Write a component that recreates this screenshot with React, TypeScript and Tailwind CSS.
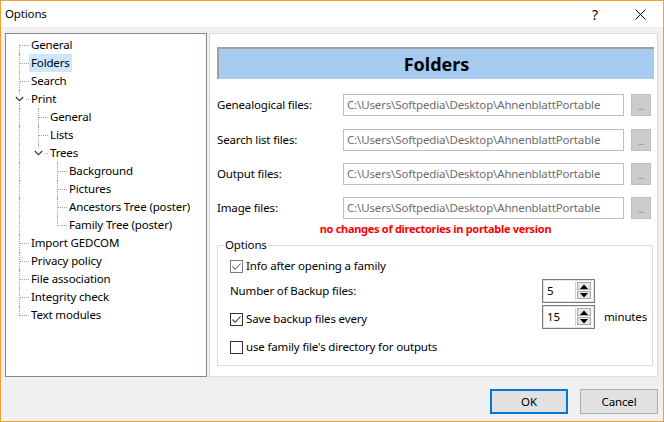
import React from "react";

type Row = {
  label: string;
  depth: number;
  guides: boolean[];
  kind: "first" | "mid" | "last";
  expander?: boolean;
  selected?: boolean;
};

const rows: Row[] = [
  { label: "General", depth: 0, guides: [], kind: "first" },
  { label: "Folders", depth: 0, guides: [], kind: "mid", selected: true },
  { label: "Search", depth: 0, guides: [], kind: "mid" },
  { label: "Print", depth: 0, guides: [], kind: "mid", expander: true },
  { label: "General", depth: 1, guides: [true], kind: "mid" },
  { label: "Lists", depth: 1, guides: [true], kind: "mid" },
  { label: "Trees", depth: 1, guides: [true], kind: "last", expander: true },
  { label: "Background", depth: 2, guides: [true, false], kind: "mid" },
  { label: "Pictures", depth: 2, guides: [true, false], kind: "mid" },
  { label: "Ancestors Tree (poster)", depth: 2, guides: [true, false], kind: "mid" },
  { label: "Family Tree (poster)", depth: 2, guides: [true, false], kind: "last" },
  { label: "Import GEDCOM", depth: 0, guides: [], kind: "mid" },
  { label: "Privacy policy", depth: 0, guides: [], kind: "mid" },
  { label: "File association", depth: 0, guides: [], kind: "mid" },
  { label: "Integrity check", depth: 0, guides: [], kind: "mid" },
  { label: "Text modules", depth: 0, guides: [], kind: "last" },
];

function Guide({ on }: { on: boolean }) {
  return (
    <div className="relative w-[19px] h-full shrink-0">
      {on && <div className="absolute left-[9px] top-0 bottom-0 border-l border-dotted border-[#a0a0a0]" />}
    </div>
  );
}

function Connector({ kind, expander }: { kind: Row["kind"]; expander?: boolean }) {
  return (
    <div className="relative w-[19px] h-full shrink-0">
      {kind === "first" && (
        <div className="absolute left-[9px] top-[9px] bottom-0 border-l border-dotted border-[#a0a0a0]" />
      )}
      {kind === "mid" && (
        <div className="absolute left-[9px] top-0 bottom-0 border-l border-dotted border-[#a0a0a0]" />
      )}
      {kind === "last" && (
        <div className="absolute left-[9px] top-0 h-[10px] border-l border-dotted border-[#a0a0a0]" />
      )}
      {expander ? (
        <>
          <div className="absolute left-[16px] right-0 top-[9px] border-t border-dotted border-[#a0a0a0]" />
          <div className="absolute left-[4px] top-[5px] w-[11px] h-[8px] bg-white flex items-center justify-center">
            <svg width="9" height="6" viewBox="0 0 9 6">
              <path d="M0.8 1 L4.5 4.7 L8.2 1" fill="none" stroke="#3c3c3c" strokeWidth="1.3" />
            </svg>
          </div>
        </>
      ) : (
        <div className="absolute left-[10px] right-0 top-[9px] border-t border-dotted border-[#a0a0a0]" />
      )}
    </div>
  );
}

function Tree() {
  return (
    <div className="w-[202px] h-full bg-white border border-[#828790] pt-[2px] pl-[4px]">
      {rows.map((r, i) => (
        <div key={i} className="flex h-[18px] items-stretch">
          {r.guides.map((g, j) => (
            <Guide key={j} on={g} />
          ))}
          <Connector kind={r.kind} expander={r.expander} />
          <div
            className={
              "px-[2px] leading-[18px] text-[11.5px] text-[#000] whitespace-nowrap " +
              (r.selected ? "bg-[#cce8ff]" : "")
            }
          >
            {r.label}
          </div>
        </div>
      ))}
    </div>
  );
}

function PathRow({ label, className }: { label: string; className: string }) {
  return (
    <div className={"flex h-[22px] items-center " + className}>
      <div className="w-[126px] text-[11.5px] text-black">{label}</div>
      <div className="w-[281px] h-[22px] border border-[#bfbfbf] bg-white flex items-center pl-[3px] text-[11.5px] text-[#6d6d6d] whitespace-nowrap overflow-hidden">
        C:\Users\Softpedia\Desktop\AhnenblattPortable
      </div>
      <div className="ml-[7px] w-[20px] h-[22px] bg-[#cccccc] border border-[#bfbfbf] flex items-end justify-center pb-[4px] text-[9px] leading-[9px] text-[#7a7a7a]">
        ...
      </div>
    </div>
  );
}

function Check({ checked, light }: { checked: boolean; light?: boolean }) {
  return (
    <div
      className={
        "w-[13px] h-[13px] bg-white border shrink-0 flex items-center justify-center " +
        (light ? "border-[#7a7a7a]" : "border-[#333333]")
      }
    >
      {checked && (
        <svg width="11" height="11" viewBox="0 0 11 11">
          <path
            d="M1.5 5.5 L4.2 8.3 L9.5 2.5"
            fill="none"
            stroke={light ? "#707070" : "#333333"}
            strokeWidth="1.1"
          />
        </svg>
      )}
    </div>
  );
}

function Spin({ value }: { value: string }) {
  return (
    <div className="w-[53px] h-[24px] border border-[#7a7a7a] shadow-[inset_0_0_0_1px_#e4e4e4] bg-white flex items-center pl-[4px] pr-[3px] shrink-0">
      <div className="flex-1 text-[11.5px] text-black">{value}</div>
      <div className="h-[18px] border-l border-[#d0d0d0] pl-[1px] flex flex-col gap-[1px]">
        <div className="w-[14px] h-[8px] bg-[#e6e6e6] border border-[#a8a8a8] flex items-center justify-center">
          <svg width="8" height="5" viewBox="0 0 8 5">
            <path d="M0 5 L4 0.5 L8 5 Z" fill="#000" />
          </svg>
        </div>
        <div className="w-[14px] h-[8px] bg-[#e6e6e6] border border-[#a8a8a8] flex items-center justify-center">
          <svg width="8" height="5" viewBox="0 0 8 5">
            <path d="M0 0 L4 4.5 L8 0 Z" fill="#000" />
          </svg>
        </div>
      </div>
    </div>
  );
}

function Panel() {
  return (
    <div className="flex-1 h-full bg-white border border-[#dcdcdc] pl-[7px] pr-[3px] pt-[13px] flex flex-col">
      <div className="h-[32px] bg-[#a6caf0] border-t-2 border-l-2 border-[#a0a0a0] flex items-center justify-center text-[18px] tracking-[0px] font-bold text-black">
        Folders
      </div>
      <PathRow label="Genealogical files:" className="mt-[15px]" />
      <PathRow label="Search list files:" className="mt-[13px]" />
      <PathRow label="Output files:" className="mt-[12px]" />
      <PathRow label="Image files:" className="mt-[12px]" />
      <div className="mt-[3px] h-[14px] leading-[14px] text-center text-[11px] tracking-[-0.3px] font-bold text-[#ff0000]">
        no changes of directories in portable version
      </div>
      <fieldset className="mt-[1px] mr-[1px] border border-[#dcdcdc] pl-[12px] pr-[0px] pb-[8px]">
        <legend className="ml-[-6px] px-[1px] text-[11.5px] leading-[16px] text-black">Options</legend>
        <div className="mt-[3px] h-[20px] flex items-center">
          <Check checked light />
          <span className="ml-[3px] text-[11.5px] text-black">Info after opening a family</span>
        </div>
        <div className="mt-[3px] h-[24px] flex items-center">
          <div className="flex-1 text-[11.5px] text-black">Number of Backup files:</div>
          <Spin value="5" />
          <div className="ml-[9px] w-[48px]" />
        </div>
        <div className="mt-[2px] h-[24px] flex items-start">
          <div className="flex-1 h-[20px] mt-[4px] flex items-center">
            <Check checked />
            <span className="ml-[3px] text-[11.5px] text-black">Save backup files every</span>
          </div>
          <Spin value="15" />
          <div className="ml-[9px] w-[48px] self-center text-[11.5px] text-black">minutes</div>
        </div>
        <div className="mt-[8px] h-[20px] flex items-center">
          <Check checked={false} />
          <span className="ml-[3px] text-[11.5px] text-black">use family file's directory for outputs</span>
        </div>
      </fieldset>
    </div>
  );
}

export default function App() {
  return (
    <div
      className="w-[664px] h-[422px] border border-[#f0a030] bg-[#f0f0f0] flex flex-col overflow-hidden tracking-[-0.15px]"
      style={{ fontFamily: '"Noto Sans", "Segoe UI", Arial, sans-serif' }}
    >
      <div className="h-[26px] bg-white flex items-center shrink-0">
        <div className="pl-[4px] text-[11.5px] text-black flex-1">Options</div>
        <div className="w-[14px] text-[14px] text-black mr-[33px] text-center">?</div>
        <svg width="11" height="11" viewBox="0 0 11 11" className="mr-[17px]">
          <path d="M0.5 0.5 L10.5 10.5 M10.5 0.5 L0.5 10.5" stroke="#000" strokeWidth="1" />
        </svg>
      </div>
      <div className="h-[344px] mt-[6px] pl-[4px] pr-[5px] flex gap-[2px] shrink-0">
        <Tree />
        <Panel />
      </div>
      <div className="flex justify-end gap-[12px] pr-[5px] mt-[12px]">
        <button className="w-[78px] h-[25px] bg-[#e1e1e1] border-2 border-[#0078d7] text-[11.5px] text-black">
          OK
        </button>
        <button className="w-[78px] h-[25px] bg-[#e1e1e1] border border-[#adadad] text-[11.5px] text-black">
          Cancel
        </button>
      </div>
    </div>
  );
}
